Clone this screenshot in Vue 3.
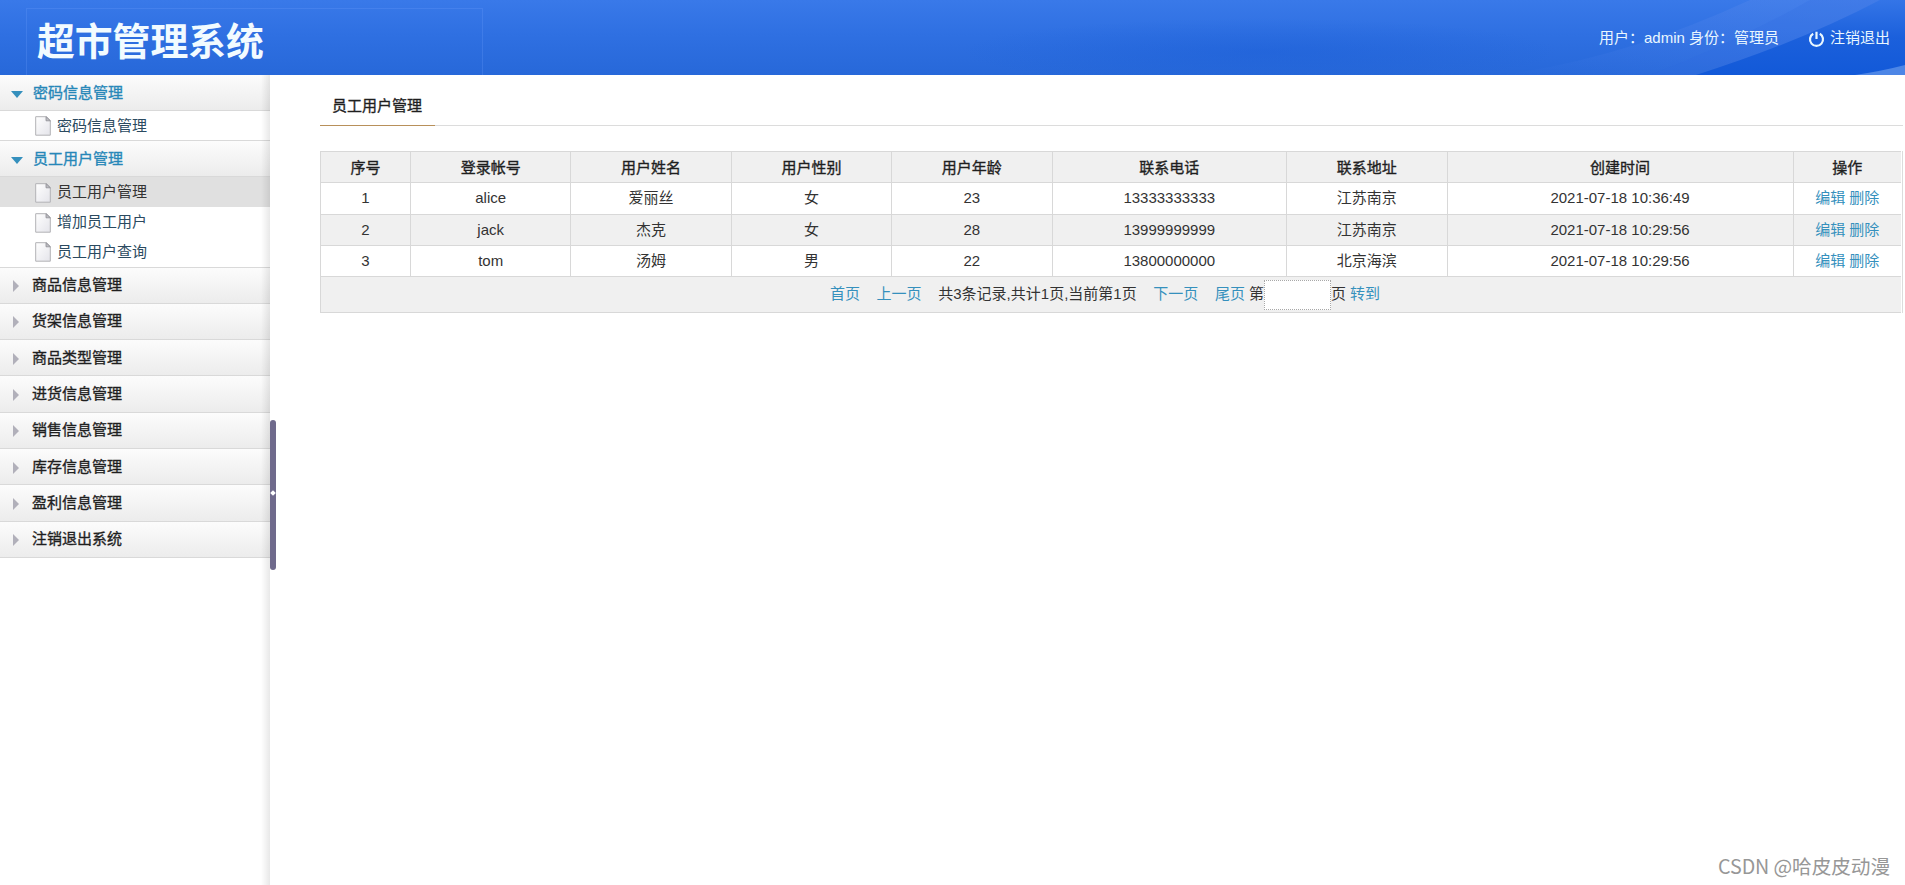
<script setup>
const menu = [
  { title: '密码信息管理', open: true, items: [{ name: '密码信息管理' }] },
  {
    title: '员工用户管理',
    open: true,
    items: [{ name: '员工用户管理', active: true }, { name: '增加员工用户' }, { name: '员工用户查询' }],
  },
  { title: '商品信息管理' },
  { title: '货架信息管理' },
  { title: '商品类型管理' },
  { title: '进货信息管理' },
  { title: '销售信息管理' },
  { title: '库存信息管理' },
  { title: '盈利信息管理' },
  { title: '注销退出系统' },
]
const columns = ['序号', '登录帐号', '用户姓名', '用户性别', '用户年龄', '联系电话', '联系地址', '创建时间', '操作']
const rows = [
  ['1', 'alice', '爱丽丝', '女', '23', '13333333333', '江苏南京', '2021-07-18 10:36:49'],
  ['2', 'jack', '杰克', '女', '28', '13999999999', '江苏南京', '2021-07-18 10:29:56'],
  ['3', 'tom', '汤姆', '男', '22', '13800000000', '北京海滨', '2021-07-18 10:29:56'],
]
</script>

<template>
  <div class="page">
    <header class="top">
      <svg class="swoosh" width="405" height="75" viewBox="0 0 405 75">
        <defs>
          <linearGradient id="band" x1="0" y1="1" x2="1" y2="0">
            <stop offset="0" stop-color="#4a80ea" stop-opacity="0" />
            <stop offset=".5" stop-color="#4a80ea" stop-opacity=".3" />
            <stop offset="1" stop-color="#5488ea" stop-opacity=".5" />
          </linearGradient>
          <linearGradient id="deep" x1="0" y1="1" x2="0" y2="0">
            <stop offset="0" stop-color="#1259d8" />
            <stop offset=".5" stop-color="#1b60dc" />
            <stop offset="1" stop-color="#3475e7" />
          </linearGradient>
        </defs>
        <path d="M0 75Q120 60 250 0H380Q300 48 196 75Z" fill="url(#band)" />
        <path d="M150 75Q230 45 310 0H380Q300 45 196 75Z" fill="#2c6be0" fill-opacity=".2" />
        <path d="M196 75Q300 42 380 0H405V75Z" fill="url(#deep)" />
        <path d="M355 75Q382 71 405 65V75Z" fill="#4d86e6" />
      </svg>
      <div class="brand"><h1>超市管理系统</h1></div>
      <div class="user">
        <span>用户：admin 身份：管理员</span>
        <a class="logout">
          <svg width="17" height="17" viewBox="0 0 17 17" fill="none" stroke="currentColor" stroke-width="2.2">
            <path d="M5.2 2.8A6.5 6.5 0 1 0 11.8 2.8M8.5 .8V8" />
          </svg>
          注销退出
        </a>
      </div>
    </header>

    <div class="body">
      <nav class="side">
        <section v-for="g in menu" :key="g.title">
          <div class="group" :class="{ open: g.open }">
            <i class="arrow"></i>{{ g.title }}
          </div>
          <ul v-if="g.items">
            <li v-for="it in g.items" :key="it.name" :class="{ active: it.active }">
              <svg width="16" height="20" viewBox="0 0 16 20">
                <defs>
                  <linearGradient id="sheet" x1="0" y1="0" x2="1" y2="1">
                    <stop offset="0" stop-color="#fff" />
                    <stop offset="1" stop-color="#e4e4ea" />
                  </linearGradient>
                </defs>
                <path d="M.7 .7H11.5L15.3 4.5V19.2H.7Z" fill="url(#sheet)" stroke="#b2b2b6" />
                <path d="M11 .7V4.8H15.3Z" fill="#bdbdc2" stroke="#8e8e94" stroke-width=".8" />
              </svg>
              {{ it.name }}
            </li>
          </ul>
        </section>
      </nav>
      <div class="splitter"><div class="handle"><i></i></div></div>

      <main class="content">
        <div class="tabs"><span class="tab">员工用户管理</span></div>
        <div class="frame">
          <table>
            <colgroup><col v-for="(c, i) in columns" :key="c" :class="'c' + i" /></colgroup>
            <thead>
              <tr><th v-for="c in columns" :key="c">{{ c }}</th></tr>
            </thead>
            <tbody>
              <tr v-for="r in rows" :key="r[0]">
                <td v-for="(v, i) in r" :key="i">{{ v }}</td>
                <td><a>编辑</a> <a>删除</a></td>
              </tr>
              <tr class="pager">
                <td colspan="9">
                  <div class="pages">
                    <a>首页</a><a>上一页</a><span>共3条记录,共计1页,当前第1页</span><a>下一页</a>
                    <div class="jump"><a>尾页</a><span class="nth">第</span><input type="text" /><span>页</span><a class="go">转到</a></div>
                  </div>
                </td>
              </tr>
            </tbody>
          </table>
        </div>
      </main>
    </div>
    <div class="mark">CSDN @哈皮皮动漫</div>
  </div>
</template>

<style>
body { margin: 0; overflow: hidden; background: #fff; }
</style>

<style scoped>
.page {
  position: relative;
  width: 1905px;
  height: 885px;
  display: flex;
  flex-direction: column;
  overflow: hidden;
  font: 15px/20px "Liberation Sans", "Noto Sans CJK SC", sans-serif;
  color: #333;
}
.top {
  position: relative;
  flex: none;
  height: 75px;
  box-sizing: border-box;
  padding: 8px 15px 0 26px;
  display: flex;
  justify-content: space-between;
  background:
    radial-gradient(ellipse 300px 34px at 1260px 52px, rgba(20, 88, 212, .35), rgba(20, 88, 212, 0)),
    linear-gradient(#3979e9, #2f70e2 45%, #2768d9);
}
.swoosh { position: absolute; right: 0; top: 0; }
.brand {
  width: 455px;
  border: 1px solid rgba(110, 160, 250, .25);
  border-bottom: 0;
}
h1 {
  margin: 6px 0 0 10px;
  font-size: 37.8px;
  line-height: 54px;
  font-weight: bold;
  color: #f2fbff;
}
.user {
  position: relative;
  display: flex;
  align-items: center;
  height: 60px;
  color: #e9f7ff;
}
.logout { display: flex; align-items: center; gap: 5px; margin-left: 29px; }
.logout svg { margin-top: 2px; }
.body { flex: 1; display: flex; min-height: 0; }
.side {
  position: relative;
  width: 270px;
  flex: none;
}
.side::after {
  content: "";
  position: absolute;
  right: 0;
  top: 0;
  bottom: 0;
  width: 9px;
  background: linear-gradient(90deg, rgba(0, 0, 0, 0), rgba(0, 0, 0, .09));
}
.group {
  display: flex;
  align-items: center;
  height: 36.3px;
  box-sizing: border-box;
  border-bottom: 1px solid #d9d9d9;
  background: linear-gradient(#fcfcfc, #ececec);
  -webkit-text-stroke: .35px currentColor;
  color: #1f1f1f;
}
.group.open { color: #2787b8; }
.arrow {
  width: 0;
  margin: 2px 13px 0 13px;
  border: 6px solid transparent;
  border-left: 6px solid #b1b0ba;
  border-right: 0;
}
.open .arrow {
  margin: 3px 10px 0 11px;
  border: 6px solid transparent;
  border-top: 7px solid #3590bd;
  border-bottom: 0;
}
ul { margin: 0; padding: 0; list-style: none; border-bottom: 1px solid #d9d9d9; }
li {
  display: flex;
  align-items: center;
  gap: 6px;
  height: 29.7px;
  padding-left: 35px;
  color: #2b4a60;
}
section:first-child li { height: 28.9px; }
li svg { margin-top: 1px; }
li.active { background: #e0e0e0; color: #333; }
.splitter { width: 6px; flex: none; display: flex; align-items: center; }
.handle {
  width: 6px;
  height: 150px;
  margin-top: 30px;
  border-radius: 3px;
  background: #6f6a8c;
  display: flex;
  align-items: center;
  justify-content: center;
}
.handle i { flex: none; width: 4px; height: 4px; margin-top: -4px; background: #fff; transform: rotate(45deg); }
.content { flex: 1; min-width: 0; padding: 11px 2px 0 44px; }
.tabs { display: flex; border-bottom: 1px solid #dcdcdc; }
.tab {
  height: 39px;
  line-height: 40px;
  padding: 0 13px 0 12px;
  margin-bottom: -1px;
  border-bottom: 1px solid #b8905a;
  -webkit-text-stroke: .35px currentColor;
  color: #1f1f1f;
}
.frame { margin-top: 25px; border-right: 1px solid #dcdcdc; padding-right: 1px; }
table { width: 100%; table-layout: fixed; border-collapse: collapse; text-align: center; }
th, td { box-sizing: border-box; height: 31.3px; padding: 0; border: 1px solid #d8d8d8; }
th { padding-top: 1px; font-weight: normal; -webkit-text-stroke: .35px currentColor; color: #1f1f1f; }
th:last-child, td:last-child { border-right: 0; }
th, tr:nth-child(even) td, .pager td { background: #f0f0f0; }
.c0 { width: 90px; }
.c1, .c2, .c3, .c4 { width: 160.4px; }
.c5 { width: 234.4px; }
.c6 { width: 160.6px; }
.c7 { width: 346px; }
a { color: #3590bd; }
.top a { color: inherit; }
.pager td { height: 36px; }
.pages, .jump { display: flex; align-items: center; }
.pages { justify-content: center; gap: 16.7px; margin-right: 12px; }
.pages a, .pages span { margin-top: -1px; }
.nth { margin-left: 4px; }
.go { margin-left: 4px; }
input {
  width: 67px;
  height: 30px;
  box-sizing: border-box;
  padding: 0;
  border: 1px dotted #a8a8a8;
  background: #fff;
}
.mark {
  position: absolute;
  right: 15px;
  bottom: 4px;
  font: 19.7px/30px "Noto Sans CJK SC", sans-serif;
  letter-spacing: -.1px;
  color: #979797;
}
</style>
